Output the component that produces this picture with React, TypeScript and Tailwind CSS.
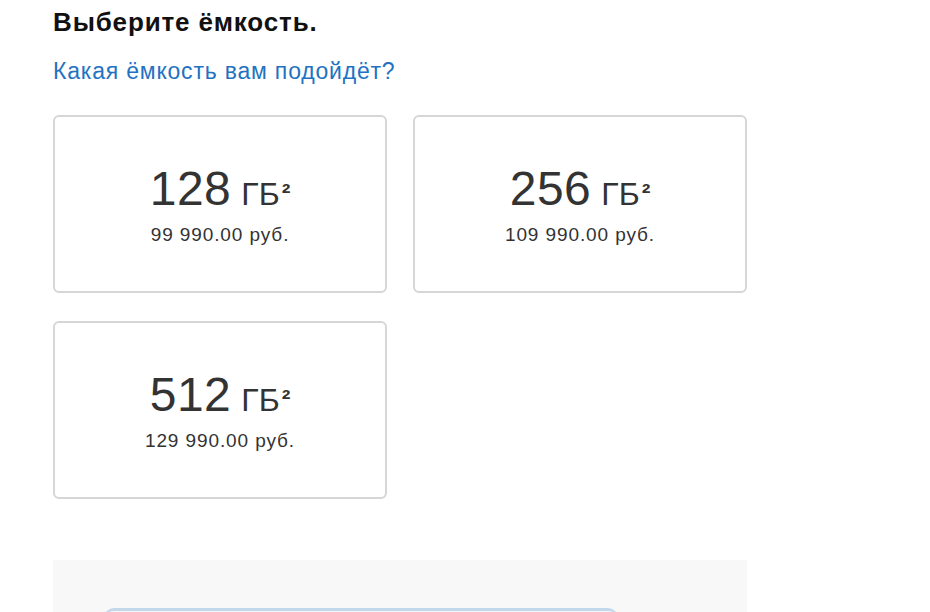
const options = [
  { size: "128", price: "99 990.00 руб." },
  { size: "256", price: "109 990.00 руб." },
  { size: "512", price: "129 990.00 руб." },
];

function CapacityCard({ size, price }: { size: string; price: string }) {
  return (
    <button className="flex h-[178px] flex-col items-center justify-center rounded-[6px] border-2 border-[#d6d6d6] bg-white text-[#333333]">
      <div className="flex items-baseline leading-none">
        <span className="text-[48px] tracking-[0.5px]">{size}</span>
        <span className="ml-[10px] text-[32px]">ГБ</span>
        <span className="relative -top-[3px] ml-[2px] text-[26px] font-bold leading-none">²</span>
      </div>
      <div className="mt-[12px] text-[19px] leading-none tracking-[0.9px] text-[#333333]">{price}</div>
    </button>
  );
}

export default function App() {
  return (
    <div className="h-[612px] overflow-hidden bg-white font-['Liberation_Sans',Arial,sans-serif]">
      <div className="ml-[53px] w-[694px] pt-[6px]">
        <h2 className="text-[26px] font-bold leading-[32px] tracking-[0.85px] text-[#111111]">Выберите ёмкость.</h2>
        <a href="#" className="mt-[20px] block text-[23px] leading-[26px] tracking-[0.8px] text-[#2372c1]">
          Какая ёмкость вам подойдёт?
        </a>
        <div className="mt-[31px] grid grid-cols-2 gap-x-[26px] gap-y-[28px]">
          {options.map((o) => (
            <CapacityCard key={o.size} size={o.size} price={o.price} />
          ))}
        </div>
        <div className="mt-[61px] h-[200px] bg-[#f8f8f8] px-[51px] pt-[48px]">
          <div className="h-[20px] w-[514px] rounded-t-[10px] border-t-[3px] border-[#c3d7ea] bg-[#f3f7fb]" />
        </div>
      </div>
    </div>
  );
}
